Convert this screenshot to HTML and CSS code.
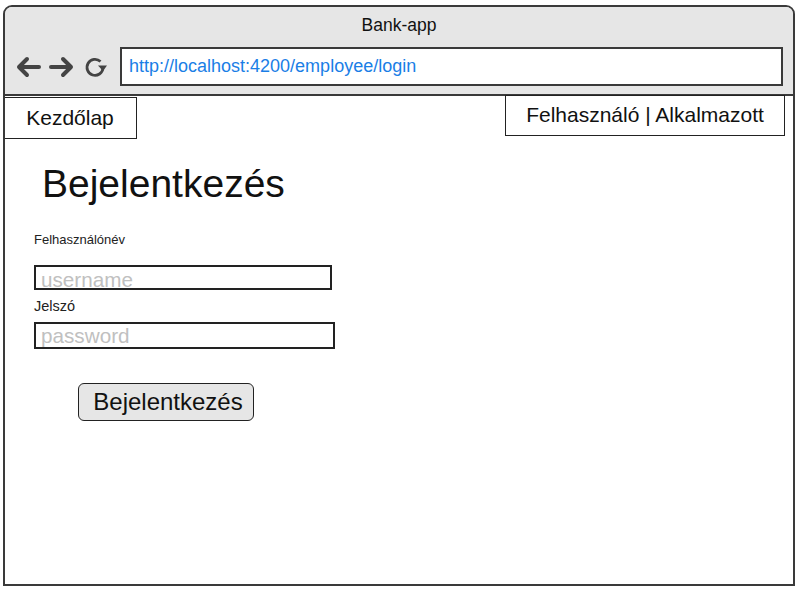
FILE: index.html
```html
<!DOCTYPE html>
<html lang="hu">
<head>
<meta charset="utf-8">
<title>Bank-app</title>
<link rel="stylesheet" href="styles.css">
</head>
<body>
<div class="frame">
  <div class="titlebar">
    <div class="title">Bank-app</div>
    <div class="navrow">
      <div class="icons">
        <svg class="icon" width="28" height="24" viewBox="0 0 28 24"><path d="M25 12 H5 M13 4 L5 12 L13 20" fill="none" stroke="#444" stroke-width="4" stroke-linecap="round" stroke-linejoin="round"/></svg>
        <svg class="icon" width="28" height="24" viewBox="0 0 28 24"><path d="M3 12 H23 M15 4 L23 12 L15 20" fill="none" stroke="#444" stroke-width="4" stroke-linecap="round" stroke-linejoin="round"/></svg>
        <svg class="icon reload" width="24" height="24" viewBox="0 0 24 24"><path d="M16.5 6.5 A8 8 0 1 0 19 13" fill="none" stroke="#444" stroke-width="2.8"/><path d="M14 10.5 L23 10.5 L19 16 Z" fill="#444"/></svg>
      </div>
      <div class="address">http://localhost:4200/employee/login</div>
    </div>
  </div>
  <div class="content">
    <div class="topnav">
      <div class="navbox home">Kezdőlap</div>
      <div class="navbox roles">Felhasználó | Alkalmazott</div>
    </div>
    <h1 class="heading">Bejelentkezés</h1>
    <form class="form">
      <div class="label first">Felhasználónév</div>
      <div class="field user"><span class="ph">username</span></div>
      <div class="label second">Jelszó</div>
      <div class="field pass"><span class="ph">password</span></div>
      <div class="btn">Bejelentkezés</div>
    </form>
  </div>
</div>
</body>
</html>
```

FILE: styles.css
```css
html, body {
  margin: 0;
  padding: 0;
  background: #ffffff;
}
body {
  font-family: "Liberation Sans", Arial, sans-serif;
  color: #111;
}
.frame {
  box-sizing: border-box;
  margin: 5px 0 0 3px;
  width: 792px;
  height: 581px;
  border: 2px solid #3a3a3a;
  border-radius: 9px 9px 0 0;
  overflow: hidden;
  display: flex;
  flex-direction: column;
}
.titlebar {
  background: #e6e6e6;
  border-bottom: 2px solid #3a3a3a;
  height: 81px;
  padding-top: 6px;
  box-sizing: content-box;
}
.title {
  text-align: center;
  font-size: 17.5px;
  line-height: 24px;
  color: #111;
  height: 24px;
}
.navrow {
  display: flex;
  align-items: center;
  margin-top: 10px;
  height: 39px;
  padding-left: 9px;
  padding-right: 10px;
}
.icons {
  display: flex;
  align-items: center;
  width: 106px;
  gap: 6px;
}
.reload {
  margin-left: 2px;
}
.address {
  flex: 1;
  box-sizing: border-box;
  height: 39px;
  background: #fff;
  border: 2px solid #3a3a3a;
  padding-left: 7px;
  font-size: 18px;
  line-height: 35px;
  color: #1a7ee6;
}
.content {
  flex: 1;
  background: #fff;
}
.topnav {
  display: flex;
  justify-content: space-between;
  align-items: flex-start;
}
.navbox {
  box-sizing: border-box;
  border: 1.5px solid #222;
  font-size: 21px;
  text-align: center;
  color: #111;
}
.home {
  margin-left: -2px;
  margin-top: 1px;
  width: 134px;
  height: 42px;
  line-height: 39px;
}
.roles {
  margin-top: -1px;
  margin-right: 8px;
  width: 280px;
  height: 41px;
  line-height: 38px;
}
.heading {
  margin: 23px 0 0 37px;
  font-size: 39px;
  font-weight: normal;
  line-height: 44px;
  color: #111;
}
.form {
  margin: 0 0 0 29px;
  display: flex;
  flex-direction: column;
  align-items: flex-start;
}
.label {
  font-size: 13px;
  line-height: 16px;
  color: #222;
}
.label.first {
  margin-top: 26px;
}
.label.second {
  margin-top: 8px;
  font-size: 14.5px;
}
.field {
  box-sizing: border-box;
  border: 2px solid #222;
  padding-left: 5px;
  font-size: 20.7px;
  line-height: 20px;
  color: #c0c0c0;
}
.field.user {
  margin-top: 17px;
  width: 298px;
  height: 25px;
  padding-top: 3px;
}
.field.pass {
  margin-top: 8px;
  width: 301px;
  height: 27px;
  padding-top: 2px;
}
.btn {
  box-sizing: border-box;
  margin: 34px 0 0 44px;
  width: 176px;
  height: 38px;
  padding-left: 4px;
  border: 1.5px solid #222;
  border-radius: 6px;
  background: #e6e6e6;
  font-size: 24px;
  line-height: 35px;
  text-align: center;
  color: #111;
}
```
